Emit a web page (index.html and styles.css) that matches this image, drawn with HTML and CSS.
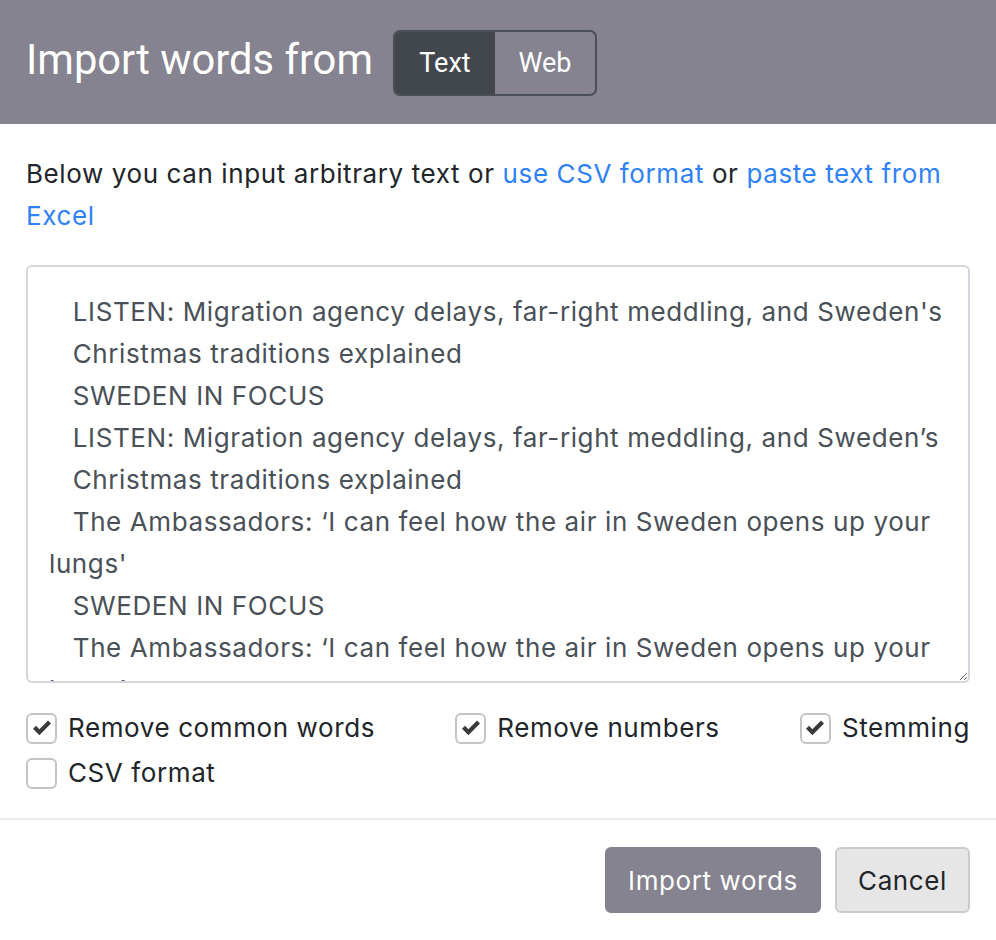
FILE: index.html
```html
<!DOCTYPE html>
<html>
<head>
<meta charset="utf-8">
<link rel="stylesheet" href="styles.css">
</head>
<body>
<div class="modal">
  <div class="modal-header">
    <h1 class="title">Import words from</h1>
    <div class="toggle">
      <span class="seg active">Text</span>
      <span class="seg">Web</span>
    </div>
  </div>
  <div class="modal-body">
    <p class="intro">Below you can input arbitrary text or <a href="#">use CSV format</a> or <a href="#">paste text from Excel</a></p>
    <textarea class="words" spellcheck="false">   LISTEN: Migration agency delays, far-right meddling, and Sweden's
   Christmas traditions explained
   SWEDEN IN FOCUS
   LISTEN: Migration agency delays, far-right meddling, and Sweden’s
   Christmas traditions explained
   The Ambassadors: ‘I can feel how the air in Sweden opens up your lungs'
   SWEDEN IN FOCUS
   The Ambassadors: ‘I can feel how the air in Sweden opens up your lungs’</textarea>
    <div class="options">
      <div class="opt-row">
        <label class="opt"><span class="box"><svg class="check" viewBox="0 0 20 20"><polygon points="1,10.8 4,7.8 7.4,11.2 16,2.6 19,5.6 7.4,17.2"/></svg></span>Remove common words</label>
        <label class="opt"><span class="box"><svg class="check" viewBox="0 0 20 20"><polygon points="1,10.8 4,7.8 7.4,11.2 16,2.6 19,5.6 7.4,17.2"/></svg></span>Remove numbers</label>
        <label class="opt"><span class="box"><svg class="check" viewBox="0 0 20 20"><polygon points="1,10.8 4,7.8 7.4,11.2 16,2.6 19,5.6 7.4,17.2"/></svg></span>Stemming</label>
      </div>
      <div class="opt-row">
        <label class="opt"><span class="box"></span>CSV format</label>
      </div>
    </div>
  </div>
  <div class="modal-footer">
    <button class="btn primary">Import words</button>
    <button class="btn secondary">Cancel</button>
  </div>
</div>
</body>
</html>
```
FILE: styles.css
```css
html, body {
  margin: 0;
  padding: 0;
  background: #ffffff;
}
body {
  font-family: Inter, "Noto Sans", sans-serif;
  color: #212529;
}
.modal {
  width: 996px;
  height: 940px;
  background: #fff;
  display: flex;
  flex-direction: column;
}
.modal-header {
  background: #85838f;
  height: 124px;
  box-sizing: border-box;
  padding: 0 26px;
  display: flex;
  align-items: center;
  gap: 20px;
}
.title {
  margin: 0;
  font-family: Roboto, "Liberation Sans", sans-serif;
  font-weight: 400;
  font-size: 41.7px;
  color: #ffffff;
  line-height: 1;
  position: relative;
  top: -2px;
}
.toggle {
  display: flex;
  height: 66px;
  box-sizing: border-box;
  border: 2px solid #4a4e55;
  border-radius: 7px;
  overflow: hidden;
  margin-top: 2px;
}
.seg {
  font-family: Roboto, "Liberation Sans", sans-serif;
  font-size: 27px;
  color: #fff;
  display: flex;
  align-items: center;
  justify-content: center;
  width: 100px;
}
.seg.active {
  background: #42474d;
}
.modal-body {
  padding: 29px 26px 24px 26px;
}
.intro {
  margin: 0 0 28px 0;
  font-size: 26px;
  line-height: 42px;
  letter-spacing: 0.6px;
  color: #212529;
}
.intro a {
  color: #2f81f7;
  text-decoration: none;
}
.words {
  display: block;
  width: 944px;
  height: 418px;
  box-sizing: border-box;
  margin: 0;
  padding: 24px 20px 10px 21px;
  border: 2px solid #d3d7db;
  border-radius: 6px;
  font-family: Inter, "Noto Sans", sans-serif;
  font-size: 26px;
  line-height: 42px;
  letter-spacing: 0.6px;
  color: #495057;
  overflow: hidden;
  resize: vertical;
  outline: none;
  background: #fff;
}
.options {
  margin-top: 24px;
  display: flex;
  flex-direction: column;
  gap: 3px;
}
.opt-row {
  display: flex;
  justify-content: space-between;
}
.opt {
  display: flex;
  align-items: center;
  gap: 11px;
  font-size: 26px;
  line-height: 42px;
  letter-spacing: 0.6px;
  color: #212529;
}
.box {
  width: 31px;
  height: 31px;
  box-sizing: border-box;
  border: 2px solid #c4c4c4;
  border-radius: 6px;
  background: #fff;
  display: flex;
  align-items: center;
  justify-content: center;
}
.check {
  width: 20px;
  height: 20px;
  fill: #3a3a3a;
}
.modal-footer {
  border-top: 2px solid #ebedef;
  padding: 27px 26px 0 26px;
  display: flex;
  justify-content: flex-end;
  gap: 14px;
}
.btn {
  height: 66px;
  font-family: Inter, "Noto Sans", sans-serif;
  font-size: 26px;
  letter-spacing: 0.6px;
  border-radius: 6px;
  padding: 0 12px;
  cursor: pointer;
}
.btn.primary {
  background: #85838f;
  color: #fff;
  border: 2px solid #85838f;
  width: 216px;
}
.btn.secondary {
  background: #e6e6e6;
  color: #212529;
  border: 2px solid #cccccc;
  width: 135px;
}
```
